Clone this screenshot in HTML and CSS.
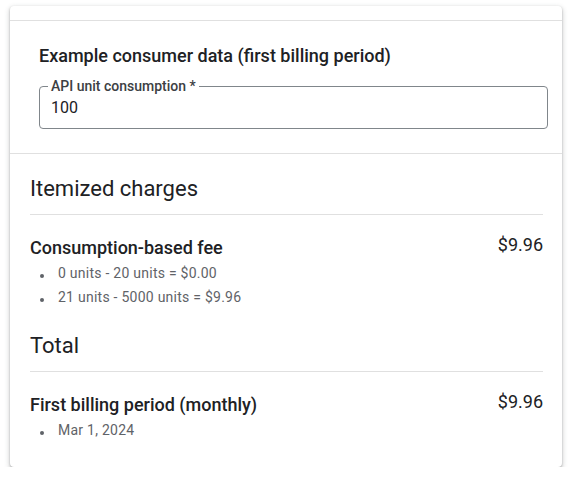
FILE: index.html
```html
<!DOCTYPE html>
<html lang="en">
<head>
<meta charset="utf-8">
<title>Pricing preview</title>
<link rel="stylesheet" href="styles.css">
</head>
<body>
<div class="card">
  <div class="card-top"></div>
  <section class="consumer">
    <h2 class="consumer-title">Example consumer data (first billing period)</h2>
    <fieldset class="field">
      <legend class="field-label">API unit consumption *</legend>
      <div class="field-value">100</div>
    </fieldset>
  </section>
  <section class="charges">
    <h3 class="group-title">Itemized charges</h3>
    <div class="item">
      <div class="item-main">
        <div class="item-name">Consumption-based fee</div>
        <ul class="item-details">
          <li>0 units - 20 units = $0.00</li>
          <li>21 units - 5000 units = $9.96</li>
        </ul>
      </div>
      <div class="item-price">$9.96</div>
    </div>
    <h3 class="group-title">Total</h3>
    <div class="item item-last">
      <div class="item-main">
        <div class="item-name">First billing period (monthly)</div>
        <ul class="item-details">
          <li>Mar 1, 2024</li>
        </ul>
      </div>
      <div class="item-price">$9.96</div>
    </div>
  </section>
</div>
</body>
</html>
```

FILE: styles.css
```css
* { box-sizing: border-box; }
body {
  margin: 0;
  background: #ffffff;
  font-family: Roboto, "Liberation Sans", Arial, sans-serif;
  color: #202124;
}
.card {
  margin: 6px 11px 0 10px;
  background: #fff;
  border-radius: 4px;
  box-shadow: 0 1px 2px 0 rgba(60,64,67,.35), 0 2px 5px 1px rgba(60,64,67,.2);
}
.card-top {
  height: 15px;
  border-bottom: 1px solid #e0e0e0;
}
.consumer {
  padding: 23px 14px 24px 29px;
  border-bottom: 1px solid #e0e0e0;
}
.consumer-title {
  margin: 0 0 10px;
  font-size: 18px;
  font-weight: 500;
  line-height: 24px;
  color: #202124;
}
.field {
  margin: 0;
  border: 1px solid #80868b;
  border-radius: 4px;
  padding: 0 11px 0 8px;
  height: 51px;
}
.field-label {
  padding: 0 3px;
  font-size: 14px;
  font-weight: 500;
  line-height: 16px;
  color: #3c4043;
}
.field-value {
  font-size: 16px;
  line-height: 24px;
  padding-left: 3px;
  margin-top: 2px;
  color: #202124;
}
.charges {
  padding: 21px 19px 0 20px;
}
.group-title {
  margin: 0;
  font-size: 22px;
  font-weight: 400;
  line-height: 28px;
  padding-bottom: 11px;
  border-bottom: 1px solid #e0e0e0;
  color: #202124;
}
.item {
  display: flex;
  justify-content: space-between;
  align-items: flex-start;
  padding: 21px 0 23px;
}
.item-last {
  padding-bottom: 25px;
}
.item-name {
  font-size: 18px;
  font-weight: 500;
  line-height: 24px;
}
.item-price {
  font-size: 18px;
  line-height: 24px;
  margin-top: -3px;
}
.item-details {
  list-style: none;
  margin: 1px 0 0;
  padding: 0 0 0 28px;
}
.item-details li {
  position: relative;
  font-size: 14px;
  letter-spacing: 0.25px;
  line-height: 24px;
  color: #5f6368;
}
.item-details li::before {
  content: "";
  position: absolute;
  left: -18px;
  top: 13px;
  width: 4px;
  height: 4px;
  border-radius: 50%;
  background: #5f6368;
}
```
